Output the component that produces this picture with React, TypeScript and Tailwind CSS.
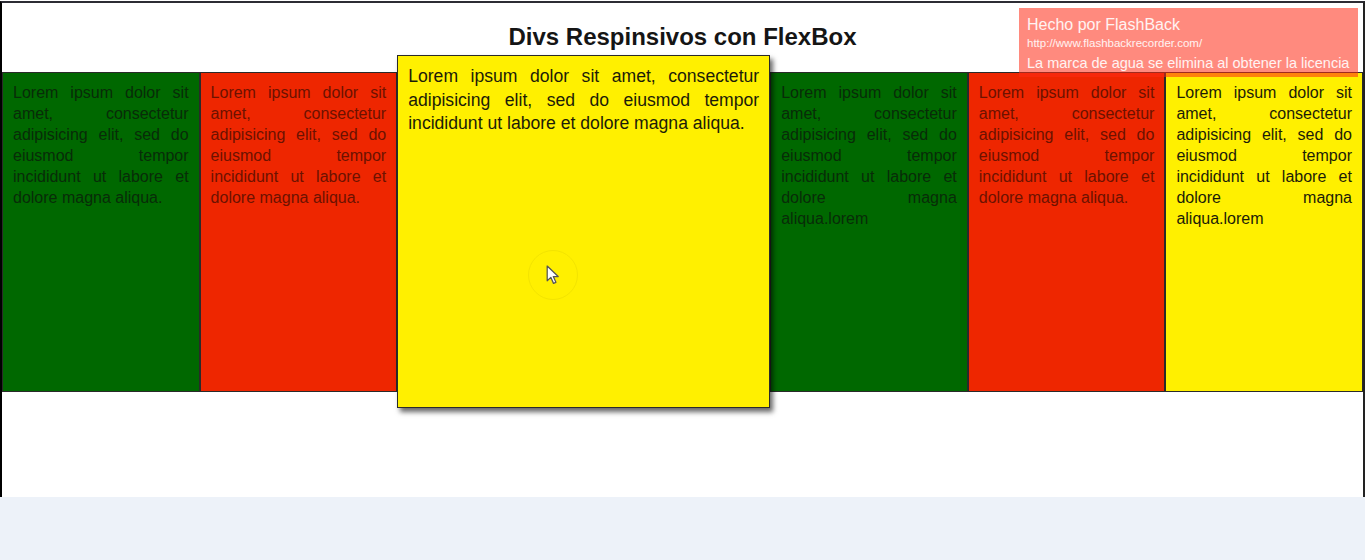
const LOREM =
  'Lorem ipsum dolor sit amet, consectetur adipisicing elit, sed do eiusmod tempor incididunt ut labore et dolore magna aliqua.';

type Box = { bg: string; text: string; body: string };

const left: Box[] = [
  { bg: 'bg-[#006800]', text: 'text-[#082c08]', body: LOREM },
  { bg: 'bg-[#ee2600]', text: 'text-[#6c1200]', body: LOREM },
];

const right: Box[] = [
  { bg: 'bg-[#006800]', text: 'text-[#082c08]', body: LOREM + 'lorem' },
  { bg: 'bg-[#ee2600]', text: 'text-[#6c1200]', body: LOREM },
  { bg: 'bg-[#fff000]', text: 'text-[#1c1c08]', body: LOREM + 'lorem' },
];

function Card({ box }: { box: Box }) {
  return (
    <div
      className={`flex-1 min-w-0 h-[320px] border border-[#2a2a2a] px-[10px] py-[9px] ${box.bg}`}
    >
      <p className={`text-justify text-[16px] leading-[21px] ${box.text}`}>{box.body}</p>
    </div>
  );
}

function Cursor() {
  return (
    <div className="absolute left-[130px] top-[194px] w-[50px] h-[50px] rounded-full border border-[#f3e400] flex items-center justify-center">
      <svg width="15" height="21" viewBox="0 0 14 20">
        <path
          d="M1 1 L1 15 L4.5 11.8 L7 17.5 L9.3 16.5 L6.8 11 L11.5 11 Z"
          fill="#fff"
          stroke="#555"
          strokeWidth="1.2"
          strokeLinejoin="round"
        />
      </svg>
    </div>
  );
}

export default function App() {
  return (
    <div className="relative h-[560px] bg-[#edf2f9] font-['Liberation_Sans',Arial,sans-serif]">
      <div className="h-[497px] bg-white pt-px">
        <div className="h-[496px] border-t-2 border-l-2 border-r-2 border-t-[#2c2c34] border-l-black border-r-[#222]">
          <h1 className="pt-[20px] text-center text-[24px] leading-[28px] font-bold text-[#151515]">
            Divs Respinsivos con FlexBox
          </h1>
          <div className="mt-[4px] flex items-center">
            {left.map((b, i) => (
              <Card key={i} box={b} />
            ))}
            <div className="relative z-10 w-[373px] h-[353px] shrink-0 border border-[#2a2a2a] bg-[#fff000] px-[10px] py-[9px] shadow-[3px_4px_5px_rgba(0,0,0,0.6)]">
              <p className="text-justify text-[17.6px] leading-[23.5px] text-[#1c1c08]">{LOREM}</p>
              <Cursor />
            </div>
            {right.map((b, i) => (
              <Card key={i} box={b} />
            ))}
          </div>
        </div>
      </div>

      <div className="absolute left-[1019px] top-[8px] w-[339px] h-[69px] bg-[#ff2a14]/55 px-[8px] pt-[7px] text-white/90">
        <div className="text-[16px] leading-[20px]">Hecho por FlashBack</div>
        <div className="text-[11.5px] leading-[15px] mt-[1px]">http://www.flashbackrecorder.com/</div>
        <div className="text-[14.5px] leading-[18px] mt-[3px] whitespace-nowrap">
          La marca de agua se elimina al obtener la licencia
        </div>
      </div>
    </div>
  );
}
